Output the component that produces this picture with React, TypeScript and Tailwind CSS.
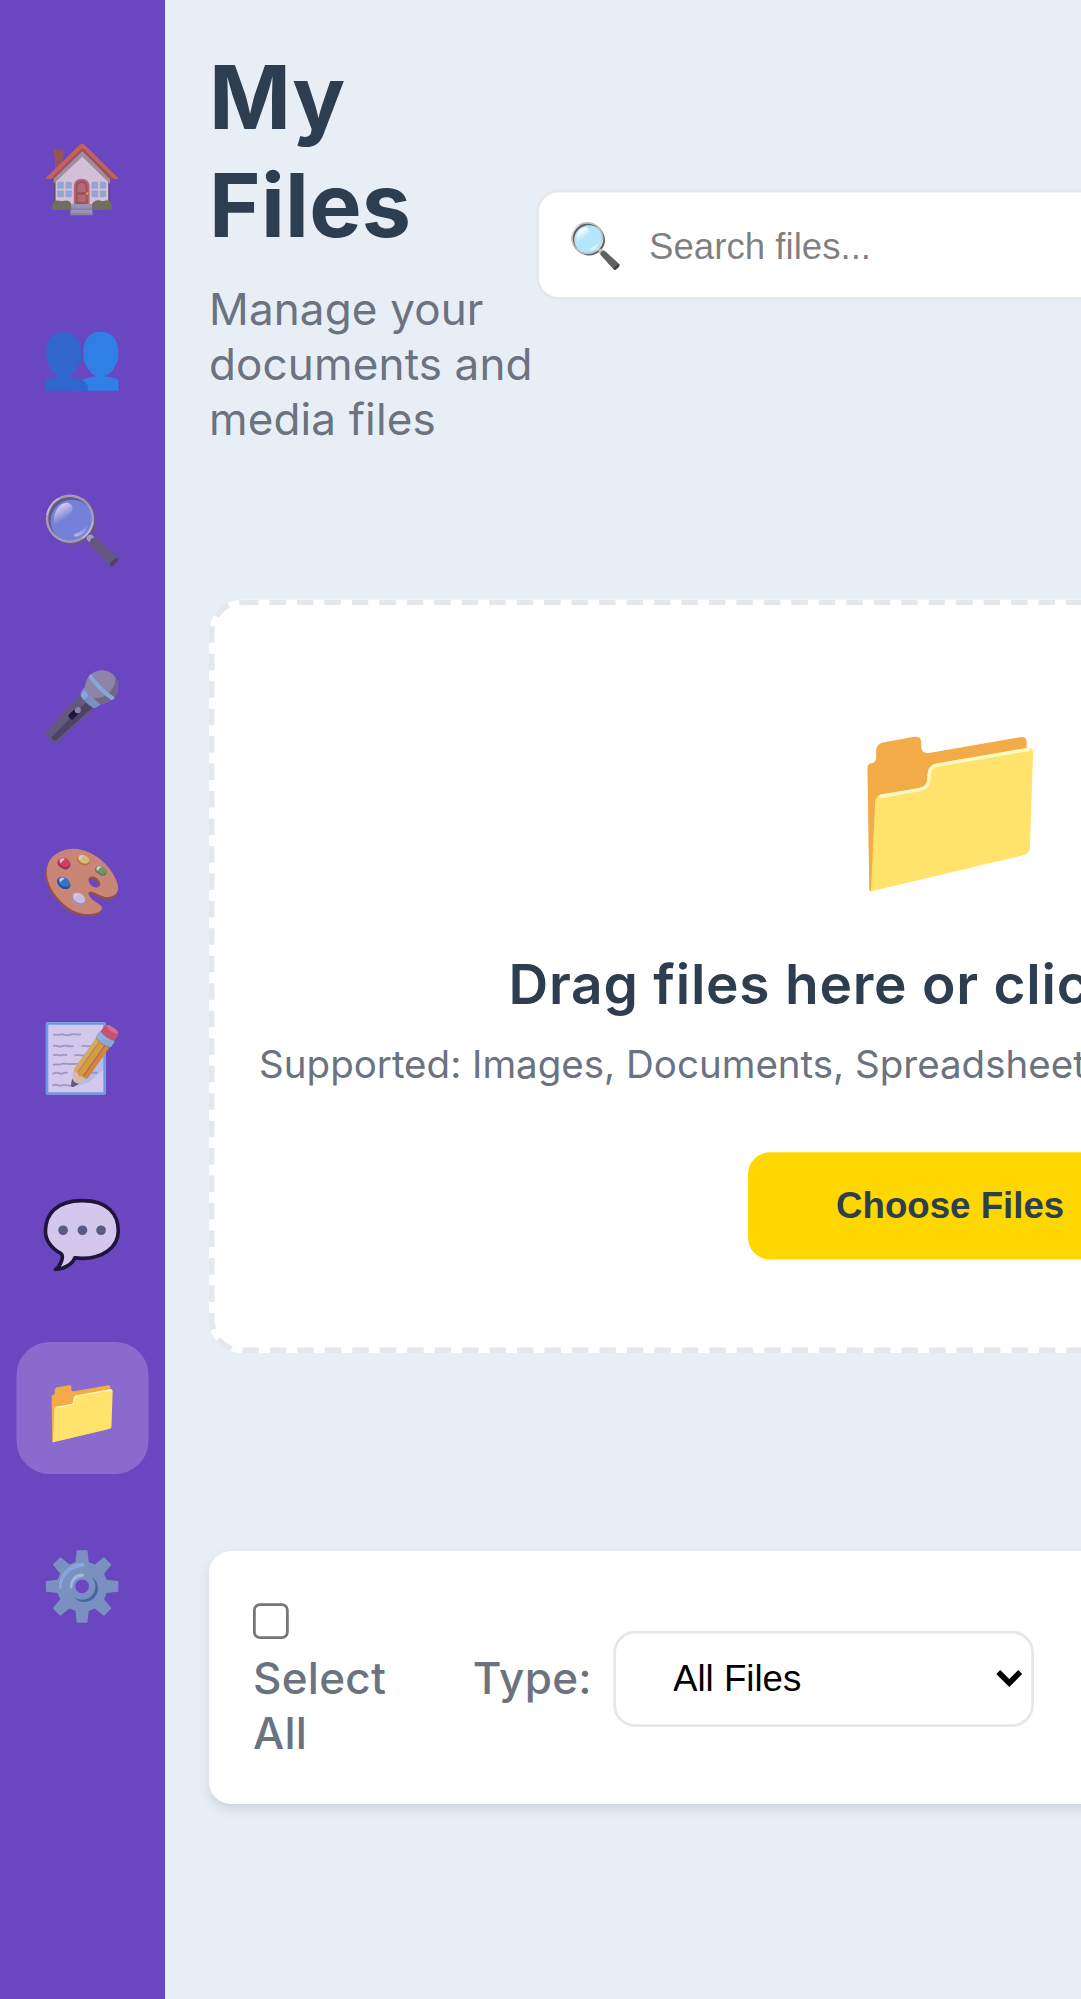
export default function App() {
  const nav = ["🏠", "👥", "🔍", "🎤", "🎨", "📝", "💬", "📁", "⚙️"];
  return (
    <div className="h-[1999px] w-[1081px] overflow-hidden bg-[#e8eef6]">
      <div className="flex h-[727px] w-[631px] origin-top-left scale-[2.75] font-['Inter',sans-serif] leading-[normal]">
        <nav className="flex w-[60px] shrink-0 flex-col items-center gap-4 bg-[#6b46c1] pt-10">
          {nav.map((icon, i) => (
            <div key={i} className={`flex h-12 w-12 items-center justify-center rounded-xl text-[24px] ${i === 7 ? "bg-white/20" : ""}`}>
              <span className={i === 7 ? "" : "opacity-70"}>{icon}</span>
            </div>
          ))}
        </nav>
        <main className="flex min-w-0 flex-1 flex-col p-4">
          <header className="flex items-center">
            <div className="w-[119px] shrink-0">
              <h1 className="mb-2 text-[32px] font-bold tracking-[0.1px] text-[#2c3e50]">My Files</h1>
              <p className="text-[16px] tracking-[0.05px] text-[#6b7280]">Manage your documents and media files</p>
            </div>
            <div className="flex h-[40px] w-[300px] shrink-0 items-center gap-[9.5px] rounded-lg border border-[#e5e7eb] bg-white pl-[10.5px] pr-3">
              <span className="text-[16px]">🔍</span>
              <input placeholder="Search files..." className="min-w-0 flex-1 bg-transparent font-['Liberation_Sans',sans-serif] text-[13.33px] outline-none" />
            </div>
          </header>
          <section className="mt-14 flex flex-col items-center rounded-xl border-2 border-dashed border-[#e5e7eb] bg-white py-8">
            <div className="mb-[15px] text-[65px]">📁</div>
            <h2 className="mb-2 text-[20px] font-semibold tracking-[0.28px] text-[#2c3e50]">Drag files here or click to upload</h2>
            <p className="mb-6 whitespace-nowrap text-[14px] text-[#6b7280]">Supported: Images, Documents, Spreadsheets, Presentations, Videos, PDFs</p>
            <button className="rounded-lg bg-[#ffd700] px-8 py-3 font-['Liberation_Sans',sans-serif] text-[13.33px] font-bold text-[#2c3e50]">Choose Files</button>
          </section>
          <section className="mt-[72px] flex items-center gap-[31.5px] rounded-lg bg-white p-4 shadow-[0_2px_4px_rgba(0,0,0,0.1)]">
            <label className="w-min font-medium tracking-[0.1px] text-[#6b7280]">
              <input type="checkbox" /> Select All
            </label>
            <div className="flex items-center gap-[8.1px]">
              <span className="font-medium tracking-[0.1px] text-[#6b7280]">Type:</span>
              <select className="h-[35px] w-[153px] rounded-lg border border-[#e5e7eb] bg-white pl-[16.4px] font-['Liberation_Sans',sans-serif] text-[13.33px] text-black">
                <option>All Files</option>
              </select>
            </div>
          </section>
        </main>
      </div>
    </div>
  );
}
